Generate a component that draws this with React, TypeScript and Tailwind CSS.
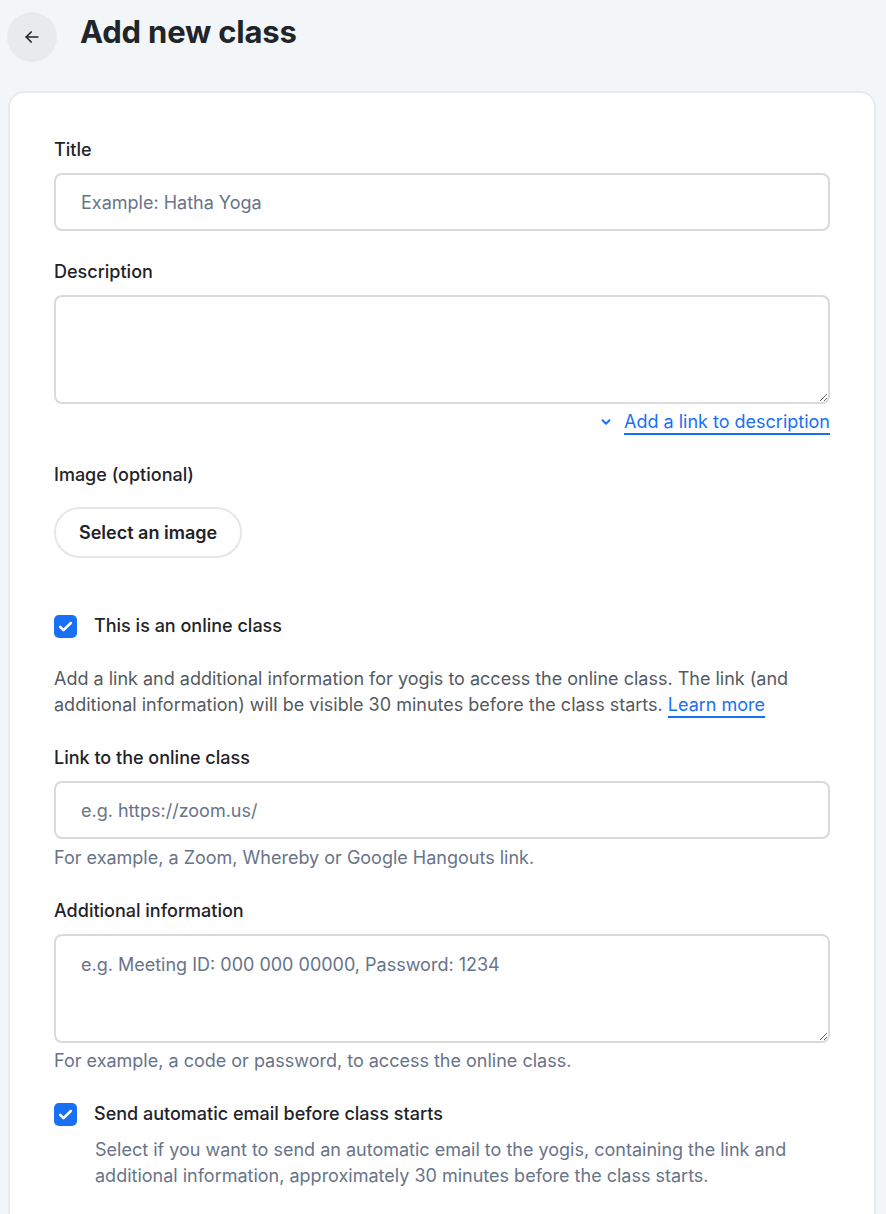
import React, { useState } from 'react';

const font = { fontFamily: 'Inter, "Noto Sans", sans-serif' };

function Checkbox({ checked, onChange }: { checked: boolean; onChange: () => void }) {
    return (
        <button
            type="button"
            onClick={onChange}
            className={`w-[23px] h-[23px] rounded-[5px] flex items-center justify-center shrink-0 ${checked ? 'bg-[#1a70f5]' : 'border-2 border-[#c9ced6] bg-white'}`}
        >
            {checked && (
                <svg width="17" height="17" viewBox="0 0 16 16" fill="none">
                    <path d="M3 8.4l3.1 3L13 4.7" stroke="white" strokeWidth="2.4" strokeLinecap="round" strokeLinejoin="round" />
                </svg>
            )}
        </button>
    );
}

export default function App() {
    const [online, setOnline] = useState(true);
    const [sendEmail, setSendEmail] = useState(true);

    return (
        <div style={font} className="min-h-screen bg-[#f3f6f9] text-[#1f2328]">
            {/* Cabeçalho */}
            <div className="flex items-center h-[74px] pl-[7px]">
                <button className="w-[50px] h-[50px] rounded-full bg-[#e8ebee] flex items-center justify-center">
                    <svg width="20" height="20" viewBox="0 0 24 24" fill="none" stroke="#212529" strokeWidth="2" strokeLinecap="round" strokeLinejoin="round">
                        <path d="M19 12H5" />
                        <path d="M11 6l-6 6 6 6" />
                    </svg>
                </button>
                <h1 className="ml-[23px] text-[31px] font-bold text-[#212529] tracking-[-0.2px] -mt-[10px]">Add new class</h1>
            </div>

            {/* Cartão do formulário */}
            <div className="ml-2 mr-[10px] mt-[17px] bg-white border-2 border-[#e6eaef] rounded-[16px] px-[44px] pt-[44px] pb-10 text-[18px] leading-[26px]">
                <label className="block font-medium">Title</label>
                <input
                    placeholder="Example: Hatha Yoga"
                    className="mt-[10px] w-full h-[58px] rounded-[8px] border-2 border-[#dadada] px-[25px] text-[18px] placeholder:text-[#67748a] outline-none"
                />

                <label className="block font-medium mt-[28px]">Description</label>
                <textarea className="mt-[10px] block w-full h-[109px] rounded-[8px] border-2 border-[#dadada] px-[25px] py-3 text-[18px] outline-none" />
                <div className="flex justify-end items-center mt-[5px]">
                    <svg width="14" height="14" viewBox="0 0 16 16" fill="none" stroke="#1a70f5" strokeWidth="2.2" strokeLinecap="round" strokeLinejoin="round" className="mr-[11px]">
                        <path d="M4 6l4 4 4-4" />
                    </svg>
                    <a href="#" className="text-[#1a70f5] underline decoration-2 underline-offset-[5px]">Add a link to description</a>
                </div>

                <label className="block font-medium mt-[27px]">Image (optional)</label>
                <button className="mt-[19px] h-[51px] px-[23px] rounded-full border-2 border-[#e3e7ec] font-semibold text-[18px]">
                    Select an image
                </button>

                <div className="flex items-center gap-[17px] mt-[55px]">
                    <Checkbox checked={online} onChange={() => setOnline(!online)} />
                    <span className="font-medium">This is an online class</span>
                </div>

                <p className="mt-[27px] text-[#555a60]">
                    Add a link and additional information for yogis to access the online class. The link (and additional information) will be visible 30 minutes before the class starts.{' '}
                    <a href="#" className="text-[#1a70f5] underline decoration-2 underline-offset-[5px]">Learn more</a>
                </p>

                <label className="block font-medium mt-[27px]">Link to the online class</label>
                <input
                    placeholder="e.g. https://zoom.us/"
                    className="mt-[10px] w-full h-[58px] rounded-[8px] border-2 border-[#dadada] px-[25px] text-[18px] placeholder:text-[#67748a] outline-none"
                />
                <p className="mt-[6px] text-[#67748a]">For example, a Zoom, Whereby or Google Hangouts link.</p>

                <label className="block font-medium mt-[27px]">Additional information</label>
                <textarea
                    placeholder="e.g. Meeting ID: 000 000 00000, Password: 1234"
                    className="mt-[10px] block w-full h-[109px] rounded-[8px] border-2 border-[#dadada] px-[25px] pt-[16px] text-[18px] leading-[26px] placeholder:text-[#67748a] outline-none resize-y"
                />
                <p className="mt-[5px] text-[#67748a]">For example, a code or password, to access the online class.</p>

                <div className="flex items-center gap-[17px] mt-[27px]">
                    <Checkbox checked={sendEmail} onChange={() => setSendEmail(!sendEmail)} />
                    <span className="font-medium">Send automatic email before class starts</span>
                </div>
                <p className="mt-[10px] ml-[41px] text-[#67748a]">
                    Select if you want to send an automatic email to the yogis, containing the link and additional information, approximately 30 minutes before the class starts.
                </p>
            </div>
        </div>
    );
}
